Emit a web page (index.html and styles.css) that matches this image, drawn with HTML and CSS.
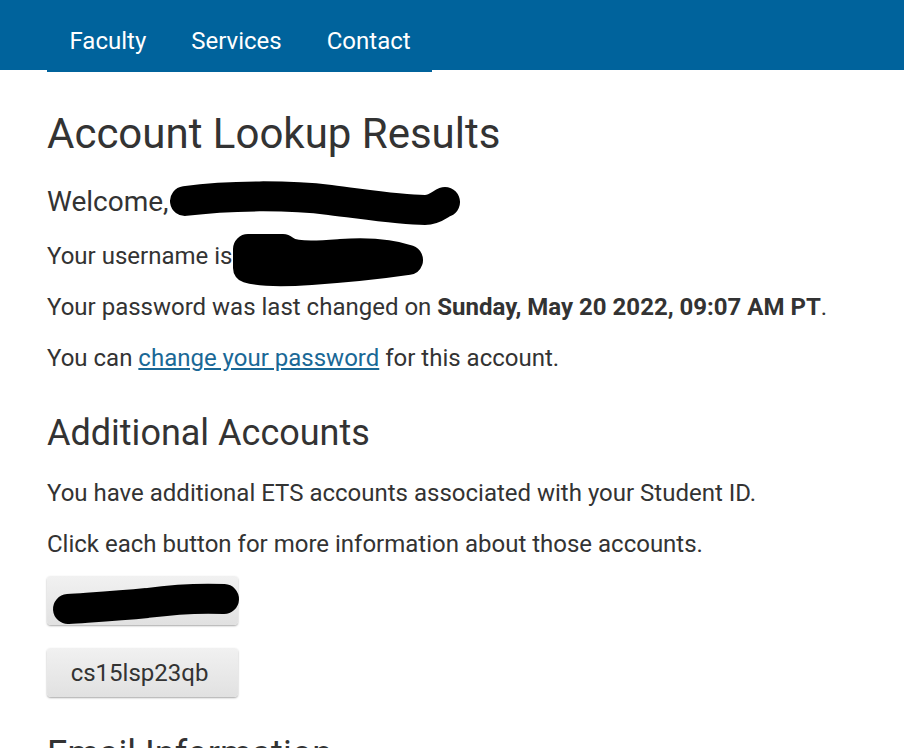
FILE: index.html
```html
<!DOCTYPE html>
<html lang="en">
<head>
<meta charset="utf-8">
<title>Account Lookup Results</title>
<link rel="stylesheet" href="styles.css">
</head>
<body>
<header class="topbar">
  <ul class="nav">
    <li><a href="#">Faculty</a></li>
    <li><a href="#">Services</a></li>
    <li><a href="#">Contact</a></li>
  </ul>
</header>
<main class="content">
  <h1 class="title">Account Lookup Results</h1>
  <p class="welcome">Welcome,<svg class="scribble scribble-name" width="292" height="44" viewBox="0 0 292 44"><path d="M15 17 C60 11 120 11 160 16 C200 21 230 26 255 26 C265 26 270 20 275 18" stroke="#000" stroke-width="30" stroke-linecap="round" stroke-linejoin="round" fill="none"/></svg></p>
  <p class="line">Your username is<svg class="scribble scribble-user" width="196" height="54" viewBox="0 0 196 54"><path d="M17 15 L52 15 C62 24 84 22 110 20 C140 18 160 20 177 26 C150 30 110 34 80 36 C50 38 30 38 17 34 Z" stroke="#000" stroke-width="30" stroke-linecap="round" stroke-linejoin="round" fill="#000"/></svg></p>
  <p class="line">Your password was last changed on <strong>Sunday, May 20 2022, 09:07 AM PT</strong>.</p>
  <p class="line">You can <a class="link" href="#">change your password</a> for this account.</p>

  <h2 class="section">Additional Accounts</h2>
  <p class="line">You have additional ETS accounts associated with your Student ID.</p>
  <p class="line">Click each button for more information about those accounts.</p>

  <div class="buttons">
    <button class="acct-btn" type="button"><svg class="scribble scribble-btn" width="200" height="52" viewBox="0 0 200 52"><path d="M21 33 C50 31 70 30 100 27 C130 23 155 22 177 23" stroke="#000" stroke-width="30" stroke-linecap="round" stroke-linejoin="round" fill="none"/></svg></button>
    <button class="acct-btn" type="button">cs15lsp23qb</button>
  </div>

  <h2 class="section section-email">Email Information</h2>
</main>
</body>
</html>
```

FILE: styles.css
```css
html, body {
  margin: 0;
  padding: 0;
}
body {
  font-family: Roboto, "Noto Sans", sans-serif;
  color: #333333;
  background: #ffffff;
  overflow: hidden;
  height: 748px;
}
.topbar {
  background: #00639c;
  height: 70px;
  padding: 0 0 0 47px;
}
.nav {
  list-style: none;
  margin: 0;
  padding: 0;
  display: flex;
  width: 385px;
  height: 72px;
  background: #00639c;
}
.nav li a {
  display: block;
  color: #ffffff;
  text-decoration: none;
  font-size: 24px;
  line-height: 28px;
  padding: 27px 22.5px 17px 22.5px;
}
.content {
  padding: 0 47px;
}
.title {
  font-size: 42px;
  font-weight: 400;
  line-height: 50px;
  margin: 39px 0 0 0;
}
.welcome {
  position: relative;
  font-size: 28px;
  line-height: 36px;
  margin: 25px 0 0 0;
}
.line {
  position: relative;
  font-size: 24px;
  line-height: 32px;
  margin: 19px 0 0 0;
}
.welcome + .line {
  margin-top: 20px;
}
.line strong {
  font-weight: 700;
}
.link {
  color: #1a6896;
  text-decoration: underline;
}
.scribble {
  position: absolute;
  overflow: visible;
}
.scribble-name {
  left: 123px;
  top: 0;
}
.scribble-user {
  left: 184px;
  top: -6px;
}
.section {
  font-size: 36px;
  font-weight: 400;
  line-height: 44px;
  margin: 37px 0 0 0;
}
.section + .line {
  margin-top: 22px;
}
.buttons {
  display: flex;
  flex-direction: column;
  align-items: flex-start;
  gap: 23px;
  margin-top: 16px;
}
.acct-btn {
  position: relative;
  width: 191px;
  height: 49px;
  border: none;
  border-radius: 4px;
  background: linear-gradient(#f1f1f1, #e1e1e1);
  box-shadow: 0 1px 2px rgba(0,0,0,0.35);
  font-family: Roboto, "Noto Sans", sans-serif;
  font-size: 24px;
  color: #333333;
  padding: 0 6px 0 0;
}
.scribble-btn {
  left: 0;
  top: 0;
}
.section-email {
  margin-top: 35px;
}
```
